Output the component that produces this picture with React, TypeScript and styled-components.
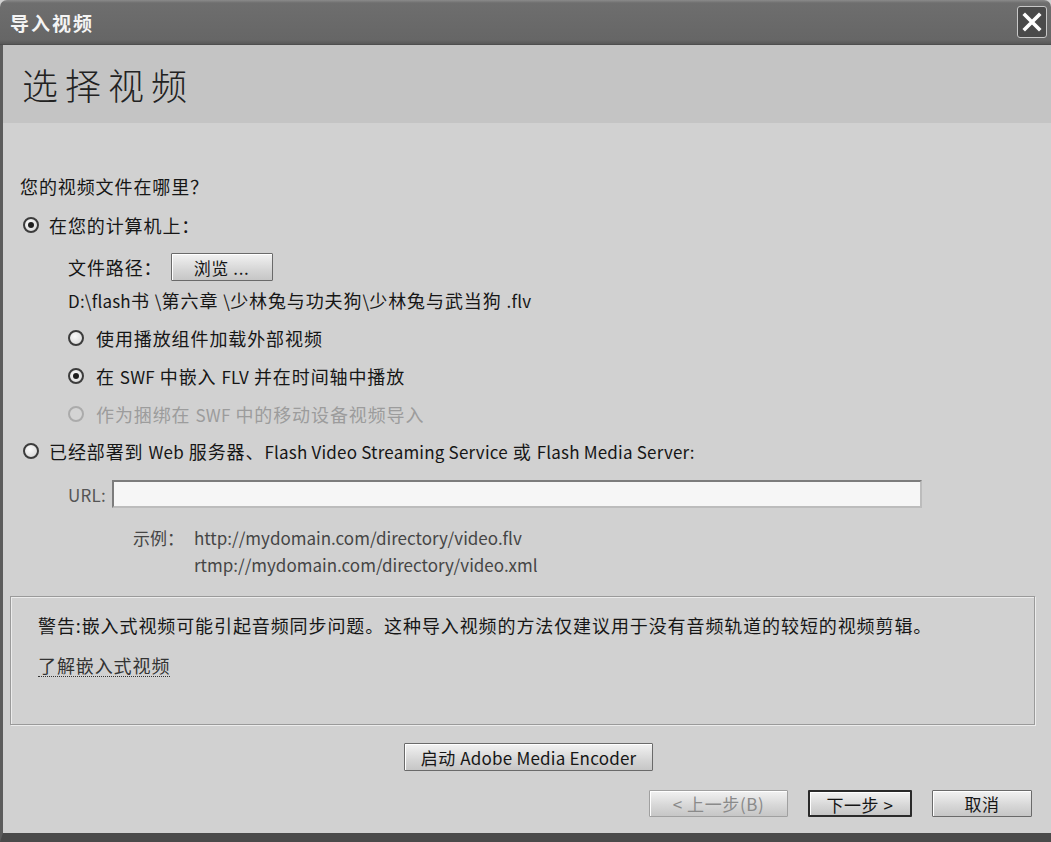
import * as React from "react";
import styled, { createGlobalStyle } from "styled-components";

const GlobalStyle = createGlobalStyle`
  html, body {
    margin: 0;
    padding: 0;
    background: #d0d0d0;
  }
  body {
    font-family: "Noto Sans CJK SC", "Noto Sans", sans-serif;
    font-size: 18px;
    letter-spacing: 0.9px;
    color: #161616;
  }
`;

const Frame = styled.div`
  width: 1051px;
  height: 842px;
  display: flex;
  flex-direction: column;
  overflow: hidden;
`;

const TitleBar = styled.div`
  height: 45px;
  flex: none;
  display: flex;
  align-items: center;
  justify-content: space-between;
  padding: 0 4px 0 10px;
  box-sizing: border-box;
  border-radius: 7px 7px 0 0;
  background: linear-gradient(#8a8a8a 0, #6e6e6e 3px, #666 40px, #555 45px);
  border-bottom: 1px solid #4e4e4e;
`;

const TitleText = styled.span`
  color: #f4f4f4;
  font-weight: 700;
  font-size: 19px;
  letter-spacing: 2px;
`;

const CloseButton = styled.div`
  width: 30px;
  height: 32px;
  box-sizing: border-box;
  border: 1px solid #c8c8c8;
  border-radius: 3px;
  background: #4a4a4a;
  display: flex;
  align-items: center;
  justify-content: center;
`;

const Client = styled.div`
  flex: 1;
  display: flex;
  flex-direction: column;
  background: #d1d1d1;
  border-left: 3px solid #5c5c5c;
  border-bottom: 9px solid #4a4a4a;
`;

const Header = styled.div`
  height: 78px;
  flex: none;
  display: flex;
  align-items: center;
  padding-left: 19px;
  background: #c4c4c4;
`;

const HeaderTitle = styled.h1`
  margin: 0;
  font-weight: 300;
  font-size: 36px;
  letter-spacing: 7px;
  color: #222;
`;

const Form = styled.div`
  display: flex;
  flex-direction: column;
  padding: 51px 0 0 17px;
`;

const Line = styled.div<{ $muted?: boolean }>`
  height: 24px;
  display: flex;
  align-items: center;
  white-space: pre;
  color: ${(p) => (p.$muted ? "#9c9c9c" : "#161616")};
`;

/* Latin runs are set tighter than the spaced-out CJK glyphs */
const En = styled.span`
  font-size: 17px;
  letter-spacing: 0.2px;
`;

const Question = styled(Line)``;

const Indent = styled.div`
  display: flex;
  flex-direction: column;
  padding-left: 48px;
`;

const Option = styled(Line)`
  margin-top: 15px;
`;

const SubOptions = styled.div`
  display: flex;
  flex-direction: column;
  gap: 14px;
  margin-top: 14px;
`;

const Radio = styled.span<{ $checked?: boolean; $disabled?: boolean }>`
  width: 16px;
  height: 16px;
  box-sizing: border-box;
  border-radius: 50%;
  margin: 0 12px 0 0;
  flex: none;
  border: 2px solid ${(p) => (p.$disabled ? "#ababab" : "#3c3c3c")};
  background: ${(p) => (p.$disabled ? "#d4d4d4" : "radial-gradient(circle at 40% 35%, #fafafa, #d4d4d4)")};
  display: flex;
  align-items: center;
  justify-content: center;
  &::after {
    content: "";
    display: ${(p) => (p.$checked ? "block" : "none")};
    width: 6px;
    height: 6px;
    border-radius: 50%;
    background: #1e1e1e;
  }
`;

const FirstRadio = styled(Radio)`
  margin-left: 3px;
  margin-right: 10px;
`;

const FileRow = styled(Line)`
  height: 28px;
  margin-top: 16px;
  gap: 8px;
`;

const PathLine = styled(Line)`
  margin-top: 7px;
`;

const Button = styled.button<{ $width: number; $default?: boolean }>`
  width: ${(p) => p.$width}px;
  height: 28px;
  padding: 0;
  box-sizing: border-box;
  font-family: inherit;
  font-size: 17px;
  letter-spacing: 0.6px;
  color: #161616;
  background: linear-gradient(#f2f2f2, #d6d6d6 60%, #c6c6c6);
  border: ${(p) => (p.$default ? "2px solid #2a2a2a" : "1px solid #6a6a6a")};
  border-radius: 1px;
  box-shadow: inset 1px 1px 0 #fff;
  &:disabled {
    color: #8a8a8a;
    border-color: #a0a0a0;
  }
`;

const RemoteOption = styled(Line)`
  margin-top: 13px;
`;

const UrlRow = styled(Line)`
  height: 28px;
  margin-top: 17px;
  gap: 6px;
  color: #555;
`;

const UrlInput = styled.div`
  width: 810px;
  height: 28px;
  box-sizing: border-box;
  background: #f6f6f6;
  border: 2px solid #7c7c7c;
  border-right-color: #bcbcbc;
  border-bottom-color: #bcbcbc;
`;

const Examples = styled.div`
  display: grid;
  grid-template-columns: 61px auto;
  row-gap: 3px;
  margin: 17px 0 0 65px;
  color: #454545;
  font-size: 17px;
  letter-spacing: 0;
`;

const ExampleCell = styled(Line)`
  color: inherit;
`;

const WarningBox = styled.div`
  height: 129px;
  box-sizing: border-box;
  margin: 20px 16px 0 7px;
  padding: 16px 0 0 27px;
  border: 1px solid #9a9a9a;
  box-shadow: inset 1px 1px 0 #ececec, 1px 1px 0 #ececec;
  display: flex;
  flex-direction: column;
  gap: 17px;
`;

const Link = styled.span`
  align-self: flex-start;
  color: #333;
  border-bottom: 1px dotted #333;
  line-height: 22px;
`;

const EncoderRow = styled.div`
  display: flex;
  justify-content: center;
  margin-top: 18px;
  padding-left: 3px;
`;

const Footer = styled.div`
  display: flex;
  justify-content: flex-end;
  gap: 20px;
  margin-top: 19px;
  padding-right: 19px;
`;

const FooterButton = styled(Button)`
  height: 27px;
`;

const CloseIcon = () => (
  <svg width="22" height="22" viewBox="0 0 22 22">
    <path d="M4 4 L18 18 M18 4 L4 18" stroke="#fff" strokeWidth="3.6" strokeLinecap="square" />
  </svg>
);

export default function App() {
  return (
    <Frame>
      <GlobalStyle />
      <TitleBar>
        <TitleText>导入视频</TitleText>
        <CloseButton>
          <CloseIcon />
        </CloseButton>
      </TitleBar>
      <Client>
        <Header>
          <HeaderTitle>选择视频</HeaderTitle>
        </Header>
        <Form>
          <Question>您的视频文件在哪里？</Question>
          <Option>
            <FirstRadio $checked />
            在您的计算机上：
          </Option>
          <Indent>
            <FileRow>
              文件路径：
              <Button $width={102}>浏览 ...</Button>
            </FileRow>
            <PathLine>
              <En>D:\flash</En>书 <En>\</En>第六章 <En>\</En>少林兔与功夫狗<En>\</En>少林兔与武当狗 <En>.flv</En>
            </PathLine>
            <SubOptions>
              <Line>
                <Radio />
                使用播放组件加载外部视频
              </Line>
              <Line>
                <Radio $checked />
                在 <En>SWF</En> 中嵌入 <En>FLV</En> 并在时间轴中播放
              </Line>
              <Line $muted>
                <Radio $disabled />
                作为捆绑在 <En>SWF</En> 中的移动设备视频导入
              </Line>
            </SubOptions>
          </Indent>
          <RemoteOption>
            <FirstRadio />
            已经部署到 <En>Web</En> 服务器、<En>Flash Video Streaming Service</En> 或 <En>Flash Media Server:</En>
          </RemoteOption>
          <Indent>
            <UrlRow>
              <En>URL:</En>
              <UrlInput />
            </UrlRow>
            <Examples>
              <ExampleCell>示例：</ExampleCell>
              <ExampleCell>http://mydomain.com/directory/video.flv</ExampleCell>
              <span />
              <ExampleCell>rtmp://mydomain.com/directory/video.xml</ExampleCell>
            </Examples>
          </Indent>
        </Form>
        <WarningBox>
          <Line>警告:嵌入式视频可能引起音频同步问题。这种导入视频的方法仅建议用于没有音频轨道的较短的视频剪辑。</Line>
          <Link>了解嵌入式视频</Link>
        </WarningBox>
        <EncoderRow>
          <Button $width={249}>
            启动 <En>Adobe Media Encoder</En>
          </Button>
        </EncoderRow>
        <Footer>
          <FooterButton $width={139} disabled>
            &lt; 上一步(B)
          </FooterButton>
          <FooterButton $width={104} $default>
            下一步 &gt;
          </FooterButton>
          <FooterButton $width={100}>取消</FooterButton>
        </Footer>
      </Client>
    </Frame>
  );
}
